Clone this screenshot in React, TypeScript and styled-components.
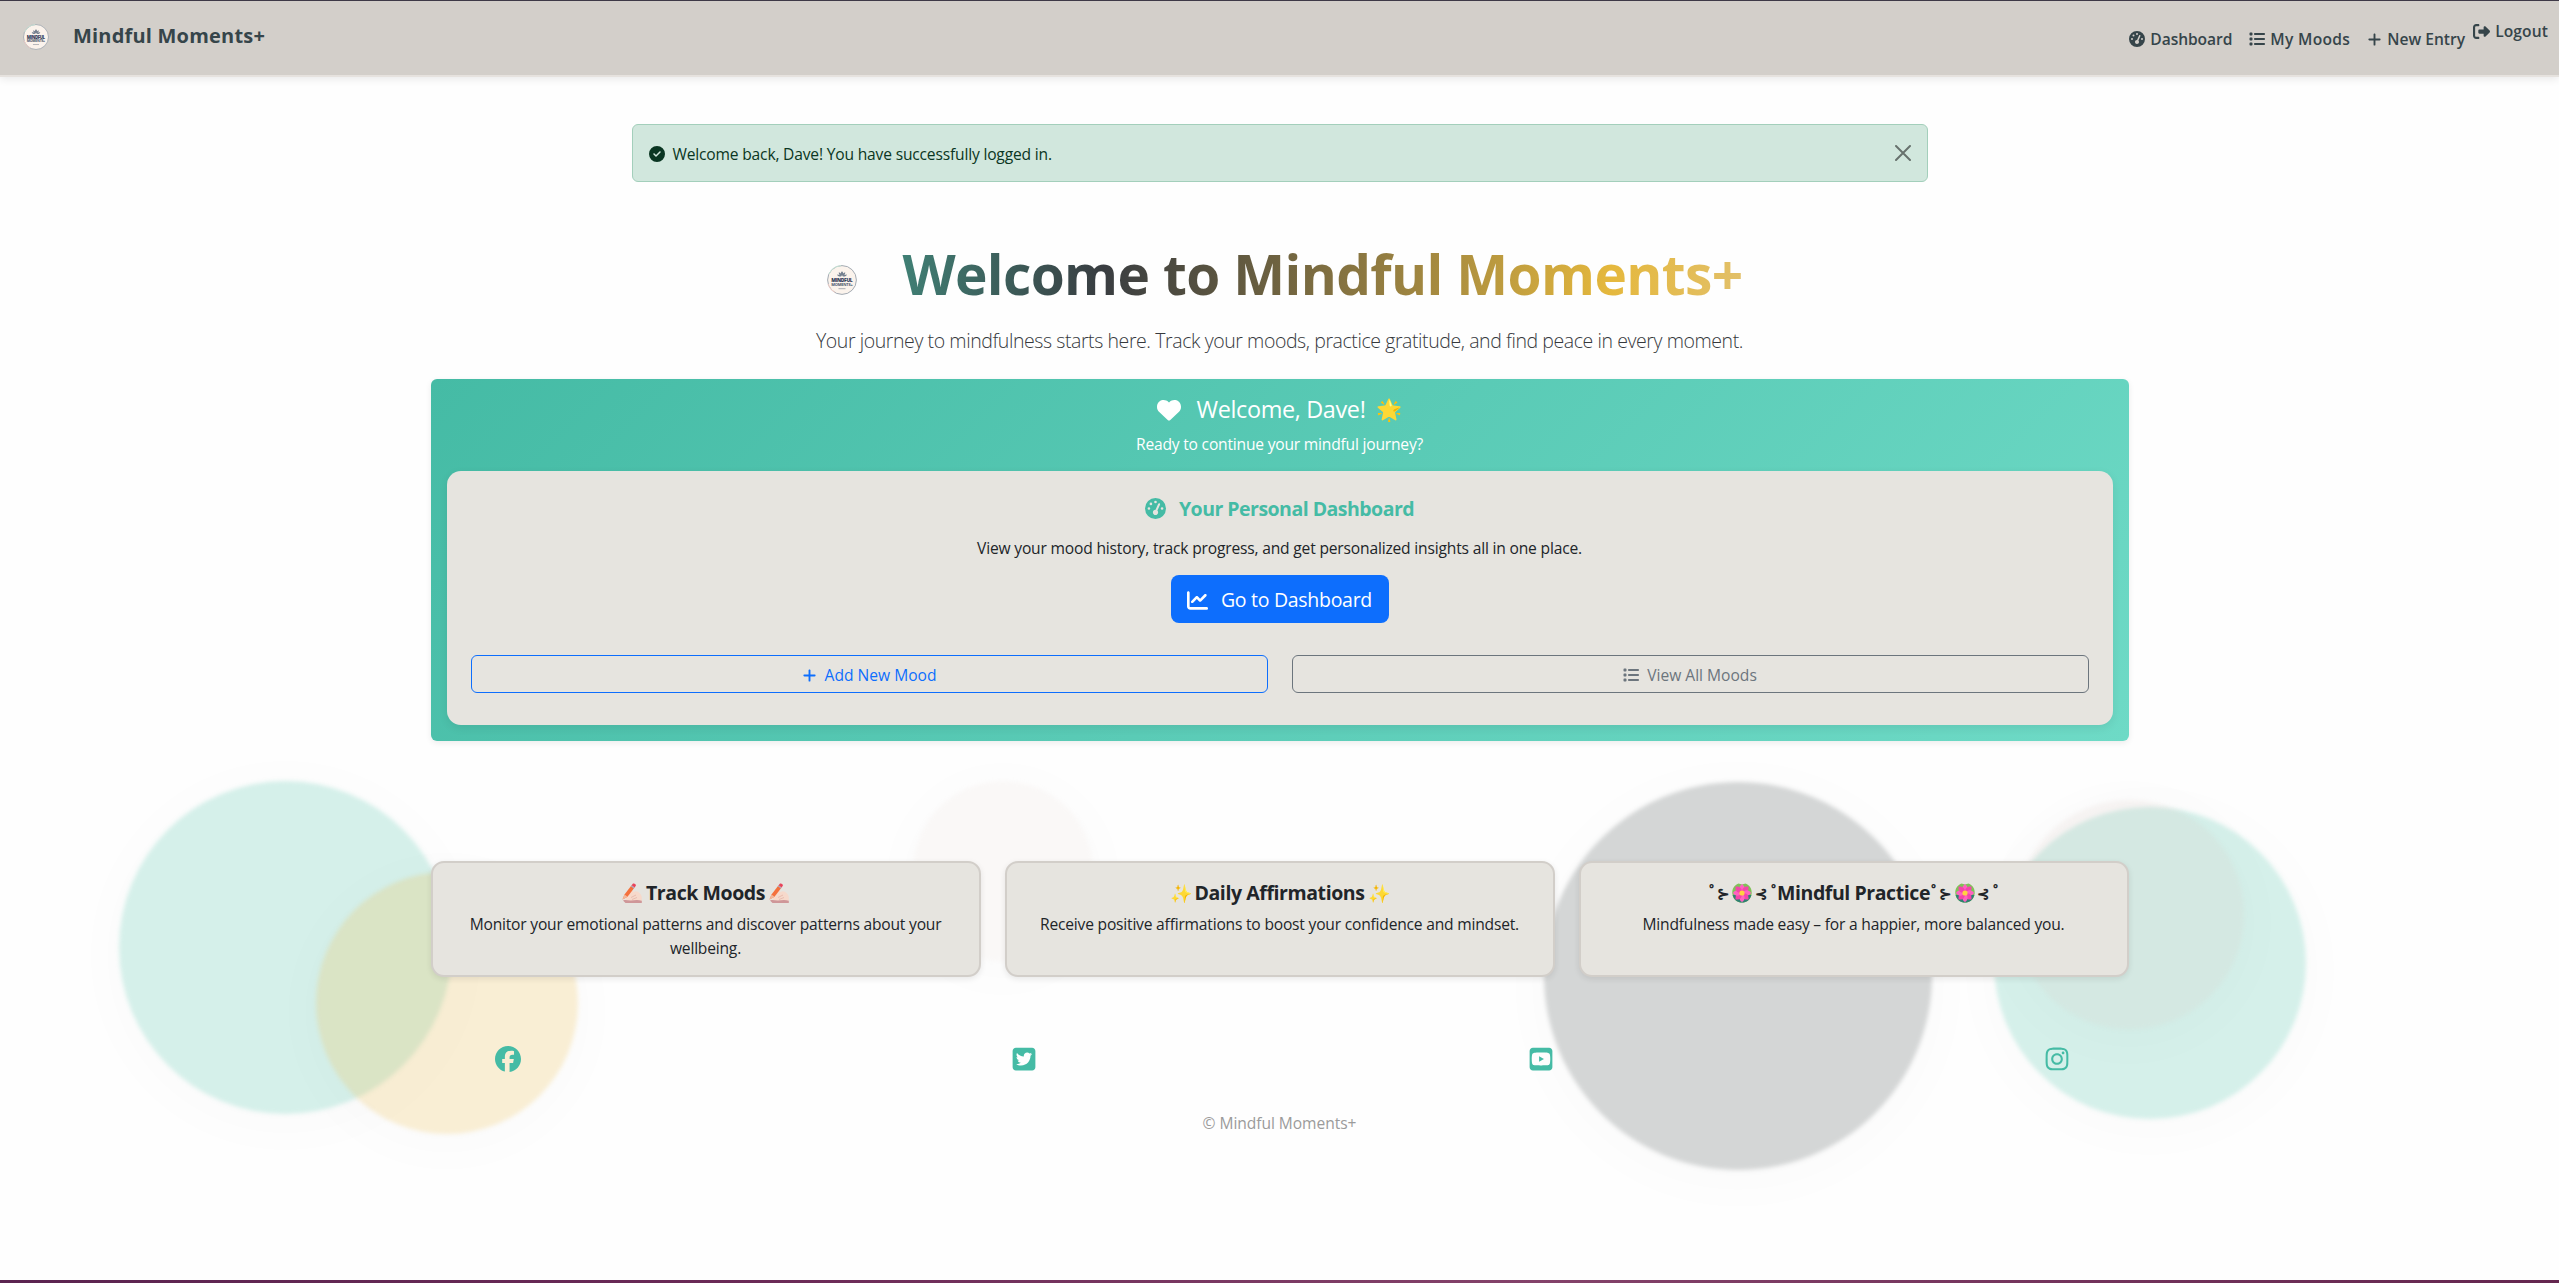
import React from "react";
import styled, { createGlobalStyle } from "styled-components";
import {
  FaGaugeHigh,
  FaList,
  FaPlus,
  FaRightFromBracket,
  FaCircleCheck,
  FaHeart,
  FaChartLine,
  FaFacebook,
  FaSquareTwitter,
  FaSquareYoutube,
  FaInstagram,
} from "react-icons/fa6";

const GlobalStyle = createGlobalStyle`
  *, *::before, *::after { box-sizing: border-box; }
  body {
    margin: 0;
    background: #fefefe;
    color: #212529;
    font-family: "Open Sans", "Noto Sans", sans-serif;
    font-size: 15.6px;
    line-height: 24px;
  }
  h1, h2, h3, p { margin: 0; }
  svg { display: block; flex: none; }
`;

const Page = styled.div`
  position: relative;
  display: flex;
  flex-direction: column;
  align-items: center;
  height: 1283px;
  overflow: hidden;
`;

const Header = styled.header`
  position: relative;
  display: flex;
  align-items: flex-start;
  align-self: stretch;
  height: 77px;
  padding: 0 11px 0 23px;
  background: #d3cfca;
  border-top: 1px solid #3e3947;
  border-bottom: 2px solid #e6e2de;
  box-shadow: 0 2px 8px rgba(0, 0, 0, 0.09);
  color: #36454a;
`;

const Brand = styled.a`
  display: flex;
  align-items: center;
  gap: 24px;
  margin-top: 23px;
  font-size: 20px;
  font-weight: 700;
  line-height: 24px;
  letter-spacing: 0.2px;
`;

const BrandName = styled.span`
  margin-top: -2px;
`;

const Nav = styled.nav`
  display: flex;
  margin: 26px 0 0 auto;
  gap: 17px;
`;

const NavLink = styled.a<{ $ls?: number; $raised?: boolean }>`
  display: flex;
  align-items: center;
  gap: 5px;
  height: 24px;
  font-weight: 600;
  letter-spacing: ${(p) => p.$ls ?? 0}px;
  margin: ${(p) => (p.$raised ? "-8px 0 0 -9px" : "0")};
`;

const Alert = styled.div`
  display: flex;
  align-items: center;
  width: 1296px;
  height: 58px;
  margin-top: 47px;
  padding: 2px 16px 0;
  background: #d1e7dd;
  border: 1px solid #a3cfbb;
  border-radius: 6px;
  color: #0a3622;
  letter-spacing: -0.18px;
`;

const AlertText = styled.span`
  margin-left: 8px;
`;

const Close = styled.button`
  margin: -3px 0 0 auto;
  padding: 0;
  border: 0;
  background: none;
  color: #000;
  opacity: 0.5;
`;

const Hero = styled.div`
  display: flex;
  align-items: center;
  gap: 45px;
  height: 67px;
  margin: 58px 0 0 11px;
`;

const LogoSlot = styled.span`
  margin-top: 12px;
`;

const Title = styled.h1`
  font-size: 55px;
  font-weight: 700;
  line-height: 77px;
  letter-spacing: -0.63px;
  background: linear-gradient(
    94deg,
    #408075 0%,
    #393d41 24%,
    #534f40 35%,
    #8f7a41 56%,
    #e5b83d 84%,
    #e2c06a 100%
  );
  background-clip: text;
  -webkit-background-clip: text;
  color: transparent;
`;

const Lead = styled.p`
  margin-top: 19px;
  font-size: 19.5px;
  font-weight: 300;
  line-height: 30px;
  color: #36393d;
  letter-spacing: -0.42px;
`;

const Panel = styled.section`
  display: flex;
  flex-direction: column;
  align-items: center;
  width: 1698px;
  height: 362px;
  margin-top: 23px;
  padding: 16px;
  border-radius: 6px;
  background: linear-gradient(135deg, #45bba5, #6edac6);
  box-shadow: 0 2px 6px rgba(0, 0, 0, 0.075);
  color: #fff;
`;

const Greeting = styled.h2`
  display: flex;
  align-items: center;
  font-size: 23.4px;
  font-weight: 400;
  line-height: 29px;
  letter-spacing: -0.34px;
`;

const GreetingText = styled.span`
  margin: 0 10px 0 15px;
`;

const Star = styled.span`
  width: 26px;
  font-size: 21px;
  letter-spacing: 0;
`;

const Prompt = styled.p`
  margin-top: 8px;
  letter-spacing: -0.2px;
`;

const DashCard = styled.div`
  display: flex;
  flex-direction: column;
  align-items: center;
  align-self: stretch;
  height: 254px;
  margin-top: 15px;
  padding: 25px 24px 24px;
  border-radius: 14px;
  background: #e6e4df;
  box-shadow: 0 3px 10px rgba(0, 0, 0, 0.075);
  color: #212529;
`;

const DashTitle = styled.h3`
  display: flex;
  align-items: center;
  gap: 13px;
  color: #45bba5;
  font-size: 19.5px;
  font-weight: 700;
  line-height: 25px;
  letter-spacing: -0.52px;
`;

const DashText = styled.p`
  margin-top: 15px;
  letter-spacing: -0.18px;
`;

const PrimaryButton = styled.a`
  display: flex;
  align-items: center;
  justify-content: center;
  gap: 13px;
  width: 218px;
  height: 48px;
  margin-top: 15px;
  padding-top: 2px;
  border-radius: 8px;
  background: #0d6efd;
  color: #fff;
  font-size: 19.5px;
  letter-spacing: -0.29px;
`;

const ButtonRow = styled.div`
  display: grid;
  grid-template-columns: 1fr 1fr;
  align-self: stretch;
  gap: 24px;
  margin-top: 32px;
`;

const OutlineButton = styled.a<{ $color: string }>`
  display: flex;
  align-items: center;
  justify-content: center;
  gap: 8px;
  height: 38px;
  padding-top: 2px;
  border: 1px solid ${(p) => p.$color};
  border-radius: 6px;
  color: ${(p) => p.$color};
  letter-spacing: 0;
`;

const Features = styled.section`
  position: relative;
  display: grid;
  grid-template-columns: repeat(3, 1fr);
  gap: 24px;
  width: 1698px;
  margin-top: 120px;
`;

const Feature = styled.article`
  height: 116px;
  padding: 18px 24px 14px;
  border: 2px solid #d2cec9;
  border-radius: 13px;
  background: #e6e4df;
  box-shadow: 0 2px 6px rgba(0, 0, 0, 0.09);
  text-align: center;
`;

const FeatureTitle = styled.h3<{ $gap?: number }>`
  display: flex;
  align-items: center;
  justify-content: center;
  gap: ${(p) => p.$gap ?? 4}px;
  font-size: 19.5px;
  font-weight: 700;
  line-height: 24px;
  letter-spacing: -0.42px;
  white-space: nowrap;
`;

const FeatureText = styled.p`
  margin-top: 7px;
  letter-spacing: -0.2px;
`;

const Emoji = styled.span`
  display: flex;
  justify-content: center;
  width: 20px;
  font-size: 18px;
  letter-spacing: 0;
`;

const Ornament = styled.span`
  display: flex;
  align-items: center;
  width: 67px;
  justify-content: space-between;
  font-size: 17px;
  font-weight: 400;
  letter-spacing: 0;
`;

const Ring = styled.span`
  width: 5px;
  font-weight: 700;
  display: flex;
  justify-content: center;
`;

const Branch = styled.span`
  display: flex;
  justify-content: center;
  width: 11px;
  font-size: 15px;
  font-weight: 700;
`;

const Social = styled.div`
  position: relative;
  display: grid;
  grid-template-columns: repeat(4, 1fr);
  justify-items: center;
  align-items: center;
  width: 2065px;
  height: 26px;
  margin: 69px 0 0 6px;
  color: #45bba5;
`;

const Copyright = styled.p`
  position: relative;
  margin-top: 39px;
  color: #9b9b9b;
  letter-spacing: -0.06px;
`;

const BottomBar = styled.div`
  align-self: stretch;
  height: 3px;
  margin-top: auto;
  background: linear-gradient(90deg, #5b2450, #6b2a57 30%, #84426a 60%, #64264f);
`;

const Bubble = styled.div<{ $x: number; $y: number; $d: number; $c: string }>`
  position: absolute;
  left: ${(p) => p.$x - p.$d / 2}px;
  top: ${(p) => p.$y - p.$d / 2}px;
  width: ${(p) => p.$d}px;
  height: ${(p) => p.$d}px;
  border-radius: 50%;
  background: ${(p) => p.$c};
  box-shadow: 0 8px 64px rgba(0, 0, 0, 0.022);
  filter: blur(2px);
`;

const bubbles: [number, number, number, string][] = [
  [285.5, 947.5, 333, "rgba(91,199,175,.25)"],
  [447, 1003, 262, "rgba(235,191,87,.25)"],
  [1003, 871, 180, "rgba(211,200,190,.1)"],
  [1738, 976, 388, "rgba(58,64,66,.213)"],
  [2150, 963, 312, "rgba(91,199,175,.25)"],
  [2129, 914, 229, "rgba(211,190,180,.15)"],
];

const Logo = ({ size }: { size: number }) => (
  <svg width={size} height={size} viewBox="0 0 30 30">
    <circle cx="15" cy="15" r="14.4" fill="#fbf3ec" stroke="#9aa3ad" strokeWidth="0.9" />
    <path d="M2 9A14.4 14.4 0 0 1 14 .7" fill="none" stroke="#c9e6d8" />
    <path d="M1 19A14.4 14.4 0 0 0 8 27.5" fill="none" stroke="#f1cfc8" />
    <path
      d="M15 6.2c1.5 1 1.8 3 0 4.6-1.800-1.600-1.500-3.600 0-4.600zM11.800 7.300c1.700.3 2.500 1.800 2.900 3.600-2-.2-3-1.500-2.900-3.600zM18.200 7.300c.1 2.100-.9 3.400-2.900 3.600.4-1.800 1.200-3.300 2.900-3.600zM10 9.400c2 0 3.500.7 4.500 1.900-2 .6-3.700 0-4.500-1.900zM20 9.400c-.8 1.900-2.500 2.500-4.500 1.900 1-1.200 2.500-1.900 4.500-1.900z"
      fill="#75808f"
    />
    <text x="4.300" y="17.200" textLength="21.400" fontSize="5" fontWeight="800" fontFamily="Open Sans, sans-serif" fill="#33405a">
      MINDFUL
    </text>
    <text x="4.300" y="21" textLength="21.400" fontSize="4" fontWeight="700" fontFamily="Open Sans, sans-serif" fill="#4a566c">
      MOMENTS+
    </text>
    <path d="M11.500 23.700h7" stroke="#a9adb3" strokeWidth="1" />
  </svg>
);

const CloseIcon = () => (
  <svg width="16" height="16" viewBox="0 0 16 16" stroke="currentColor" strokeWidth="2" strokeLinecap="round">
    <path d="M1 1l14 14M15 1L1 15" />
  </svg>
);

const Lotus = () => (
  <svg width="20" height="20" viewBox="0 0 20 20">
    <path d="M10 1.500L13.500.6C18 2.500 20 6 19.700 10.500 19 16.500 15 19.600 10 19.600S.9 16.500.3 10.500C0 6 2 2.500 6.500.6z" fill="#7fc257" />
    <path d="M.6 12C2 17 5.600 19.600 10 19.600S18 17 19.400 12z" fill="#2f7f74" />
    {[0, 45, 90, 135, 180, 225, 270, 315].map((a) => (
      <path
        key={a}
        d="M10 10C6.200 6.800 6.800 3.200 10 .9c3.200 2.300 3.800 5.900 0 9.100z"
        fill={a % 90 ? "#f445ab" : "#ff62c0"}
        transform={`rotate(${a} 10 10)`}
      />
    ))}
    <circle cx="10" cy="10" r="2.600" fill="#ffd23f" />
  </svg>
);

const WritingHand = () => (
  <svg width="20" height="20" viewBox="0 0 20 20">
    <path d="M4 14L8.500 8c1-1.200 2.800-.6 2.400 1L14 8.300c2.500 0 5.800 3 5.800 6.500V18.500H8C4 18.500 2.600 16 4 14z" fill="#f6d9cb" />
    <path d="M1 17.500c3-1.200 5 .2 8 0s7-1 10.800.3V20H3.500z" fill="#cf9799" />
    <path d="M9 14.500l5-2.500M10 16.500l5-2" stroke="#e3b5a8" strokeWidth=".8" />
    <path d="M.5 16.500L2.500 11.500 9.600 2.300l3 2.200-7.100 9.300z" fill="#f4703c" />
    <path d="M.5 16.500l2-5 3 2.300z" fill="#f2b79a" />
    <path d="M9.600 2.300L11 .6c1.200-.8 3.400.7 2.800 2.200l-1.200 1.700z" fill="#e8435a" />
    <path d="M9.200 2.900l3 2.200" stroke="#9db4dc" strokeWidth="1.100" />
  </svg>
);

const Flourish = () => (
  <Ornament>
    <Ring>˚</Ring>
    <Branch>⊱</Branch>
    <Lotus />
    <Branch>⊰</Branch>
    <Ring>˚</Ring>
  </Ornament>
);

export default function App() {
  return (
    <Page>
      <GlobalStyle />
      {bubbles.map(([x, y, d, c], i) => (
        <Bubble key={i} $x={x} $y={y} $d={d} $c={c} />
      ))}
      <Header>
        <Brand>
          <Logo size={26} />
          <BrandName>Mindful Moments+</BrandName>
        </Brand>
        <Nav>
          <NavLink $ls={-0.08}>
            <FaGaugeHigh size={16} />
            Dashboard
          </NavLink>
          <NavLink $ls={0.3}>
            <FaList size={16} />
            My Moods
          </NavLink>
          <NavLink $ls={0.02}>
            <FaPlus size={15} />
            New Entry
          </NavLink>
          <NavLink $raised $ls={0.1}>
            <FaRightFromBracket size={17} />
            Logout
          </NavLink>
        </Nav>
      </Header>

      <Alert>
        <FaCircleCheck size={16} />
        <AlertText>Welcome back, Dave! You have successfully logged in.</AlertText>
        <Close aria-label="Close">
          <CloseIcon />
        </Close>
      </Alert>

      <Hero>
        <LogoSlot>
          <Logo size={30} />
        </LogoSlot>
        <Title>Welcome to Mindful Moments+</Title>
      </Hero>
      <Lead>
        Your journey to mindfulness starts here. Track your moods, practice gratitude, and find peace in every moment.
      </Lead>

      <Panel>
        <Greeting>
          <FaHeart size={24} />
          <GreetingText>Welcome, Dave!</GreetingText>
          <Star>🌟</Star>
        </Greeting>
        <Prompt>Ready to continue your mindful journey?</Prompt>
        <DashCard>
          <DashTitle>
            <FaGaugeHigh size={21} />
            Your Personal Dashboard
          </DashTitle>
          <DashText>View your mood history, track progress, and get personalized insights all in one place.</DashText>
          <PrimaryButton>
            <FaChartLine size={21} />
            Go to Dashboard
          </PrimaryButton>
          <ButtonRow>
            <OutlineButton $color="#0d6efd">
              <FaPlus size={15} />
              Add New Mood
            </OutlineButton>
            <OutlineButton $color="#6c757d">
              <FaList size={16} />
              View All Moods
            </OutlineButton>
          </ButtonRow>
        </DashCard>
      </Panel>

      <Features>
        <Feature>
          <FeatureTitle>
            <WritingHand />
            Track Moods
            <WritingHand />
          </FeatureTitle>
          <FeatureText>Monitor your emotional patterns and discover patterns about your wellbeing.</FeatureText>
        </Feature>
        <Feature>
          <FeatureTitle>
            <Emoji>✨</Emoji>
            Daily Affirmations
            <Emoji>✨</Emoji>
          </FeatureTitle>
          <FeatureText>Receive positive affirmations to boost your confidence and mindset.</FeatureText>
        </Feature>
        <Feature>
          <FeatureTitle $gap={1}>
            <Flourish />
            Mindful Practice
            <Flourish />
          </FeatureTitle>
          <FeatureText>Mindfulness made easy – for a happier, more balanced you.</FeatureText>
        </Feature>
      </Features>

      <Social>
        <FaFacebook size={26} />
        <FaSquareTwitter size={26} />
        <FaSquareYoutube size={26} />
        <FaInstagram size={26} />
      </Social>
      <Copyright>© Mindful Moments+</Copyright>
      <BottomBar />
    </Page>
  );
}
